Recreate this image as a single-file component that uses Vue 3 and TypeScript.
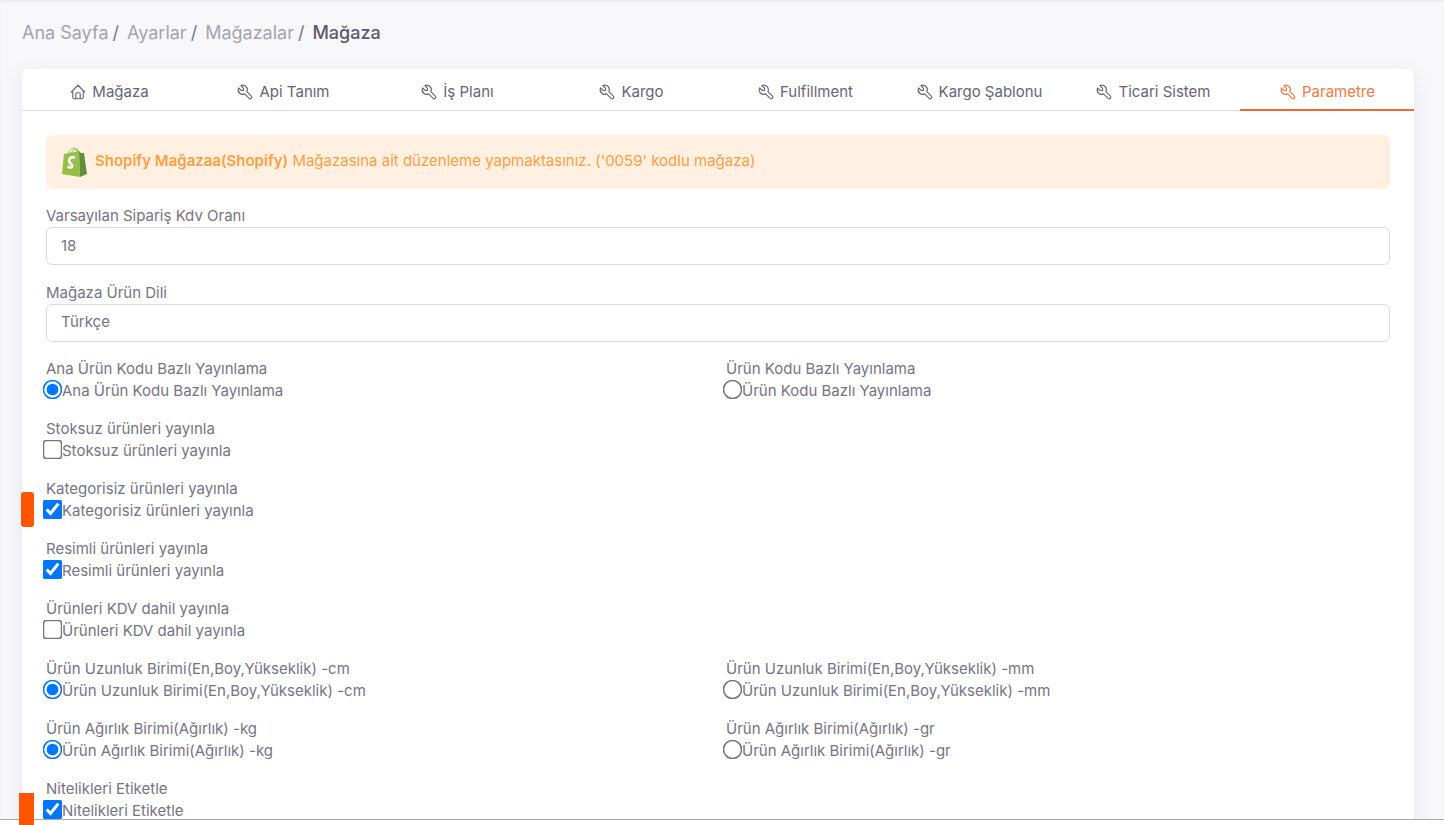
<script setup lang="ts">
import { ref } from 'vue'

interface Option {
  id: string
  label: string
  type: 'radio' | 'checkbox'
  group?: string
  checked: boolean
  flag?: string
}

const crumbs = ['Ana Sayfa', 'Ayarlar', 'Mağazalar']
const tabs = ['Mağaza', 'Api Tanım', 'İş Planı', 'Kargo', 'Fulfillment', 'Kargo Şablonu', 'Ticari Sistem', 'Parametre']
const active = ref('Parametre')
const vat = ref('18')
const language = ref('Türkçe')

const rows: Option[][] = [
  [
    { id: 'pub-main', label: 'Ana Ürün Kodu Bazlı Yayınlama', type: 'radio', group: 'publish', checked: true },
    { id: 'pub-code', label: 'Ürün Kodu Bazlı Yayınlama', type: 'radio', group: 'publish', checked: false },
  ],
  [{ id: 'no-stock', label: 'Stoksuz ürünleri yayınla', type: 'checkbox', checked: false }],
  [{ id: 'no-category', label: 'Kategorisiz ürünleri yayınla', type: 'checkbox', checked: true, flag: 'flag-small' }],
  [{ id: 'with-image', label: 'Resimli ürünleri yayınla', type: 'checkbox', checked: true }],
  [{ id: 'with-vat', label: 'Ürünleri KDV dahil yayınla', type: 'checkbox', checked: false }],
  [
    { id: 'len-cm', label: 'Ürün Uzunluk Birimi(En,Boy,Yükseklik) -cm', type: 'radio', group: 'length', checked: true },
    { id: 'len-mm', label: 'Ürün Uzunluk Birimi(En,Boy,Yükseklik) -mm', type: 'radio', group: 'length', checked: false },
  ],
  [
    { id: 'w-kg', label: 'Ürün Ağırlık Birimi(Ağırlık) -kg', type: 'radio', group: 'weight', checked: true },
    { id: 'w-gr', label: 'Ürün Ağırlık Birimi(Ağırlık) -gr', type: 'radio', group: 'weight', checked: false },
  ],
  [{ id: 'tag-attrs', label: 'Nitelikleri Etiketle', type: 'checkbox', checked: true, flag: 'flag-large' }],
]
</script>

<template>
  <div class="page">
    <nav class="breadcrumb" aria-label="Sayfa yolu">
      <template v-for="c in crumbs" :key="c">
        <a href="#">{{ c }}</a><span class="sep">/</span>
      </template>
      <span class="current">Mağaza</span>
    </nav>

    <main class="card">
      <div class="tabs" role="tablist">
        <button
          v-for="(t, i) in tabs"
          :key="t"
          type="button"
          role="tab"
          class="tab"
          :class="{ active: active === t }"
          :aria-selected="active === t"
          @click="active = t"
        >
          <svg v-if="i === 0" class="icon" viewBox="0 0 24 24" aria-hidden="true">
            <path d="M5 12H3l9-9 9 9h-2M5 12v7a2 2 0 0 0 2 2h10a2 2 0 0 0 2-2v-7M9 21v-6a2 2 0 0 1 2-2h2a2 2 0 0 1 2 2v6" />
          </svg>
          <svg v-else class="icon" viewBox="0 0 24 24" aria-hidden="true">
            <path d="M7 10h3V7L6.500 3.500a6 6 0 0 1 8 8l6 6a2 2 0 0 1-3 3l-6-6a6 6 0 0 1-8-8L7 10" />
          </svg>
          <span>{{ t }}</span>
        </button>
      </div>

      <div class="content">
        <div class="alert" role="alert">
          <svg class="logo" viewBox="0 0 26 30" aria-hidden="true">
            <path d="M7 8C8 3 11 1 13 1s3 2 4 5M10 7c1-3 3-5 5-5s3 2 3 4" fill="none" stroke="#95bf47" stroke-width="1" />
            <path d="M3 7l15-3 1 26L1 27z" fill="#95bf47" />
            <path d="M18 4l2 2 3 0 3 21-7 3z" fill="#5e8e3e" />
            <path d="M14 10.500c-3.500-1-6 .5-6 3.200 0 2.800 3.500 2.800 3.200 5.300-.3 2-2.600 1.800-4.500.4" fill="none" stroke="#fff" stroke-width="2.700" />
          </svg>
          <p><strong>Shopify Mağazaa(Shopify)</strong> Mağazasına ait düzenleme yapmaktasınız. ('0059' kodlu mağaza)</p>
        </div>

        <div class="field">
          <label for="vat">Varsayılan Sipariş Kdv Oranı</label>
          <input id="vat" v-model="vat" type="text" class="control" />
        </div>
        <div class="field">
          <label for="language">Mağaza Ürün Dili</label>
          <select id="language" v-model="language" class="control">
            <option>Türkçe</option>
          </select>
        </div>

        <div v-for="(row, r) in rows" :key="r" class="row">
          <div v-for="o in row" :key="o.id" class="option">
            <span v-if="o.flag" class="flag" :class="o.flag"></span>
            <span class="title">{{ o.label }}</span>
            <label class="choice">
              <input :id="o.id" :type="o.type" :name="o.group ?? o.id" :checked="o.checked" />
              <span>{{ o.label }}</span>
            </label>
          </div>
        </div>
      </div>
    </main>
    <div class="bottom-line"></div>
  </div>
</template>

<style>
html {
  background: #f8f7fa;
}
body {
  margin: 0;
  overflow: hidden;
}
</style>

<style scoped>
.page {
  box-sizing: border-box;
  height: 100vh;
  overflow: hidden;
  padding: 20px 30px 0 22px;
  background: #f8f7fa;
  box-shadow: inset 0 2px 2px #ececef;
  color: #777384;
  font: 15px/22px Inter, "Liberation Sans", sans-serif;
}
.breadcrumb {
  display: flex;
  margin-bottom: 23px;
  font-size: 18px;
  line-height: 26px;
}
.breadcrumb a {
  color: #a5a3ae;
  text-decoration: none;
}
.sep {
  margin: 0 8px 0 4px;
}
.current {
  color: #5d596c;
  font-weight: 500;
}
.card {
  border-radius: 6px;
  background: #fff;
  box-shadow: 0 4px 18px rgba(75, 70, 92, 0.1);
}
.tabs {
  display: grid;
  grid-template-columns: repeat(8, 1fr);
  box-shadow: inset 0 -1px #dbdade;
}
.tab {
  display: flex;
  align-items: center;
  justify-content: center;
  gap: 5px;
  height: 42px;
  padding: 6px 0 0;
  border: 0;
  border-bottom: 2px solid transparent;
  background: none;
  color: #686477;
  font: inherit;
  white-space: nowrap;
}
.tab.active {
  border-color: #ea6a35;
  color: #f07a45;
}
.icon {
  width: 18px;
  height: 18px;
  fill: none;
  stroke: currentColor;
  stroke-width: 1.5;
  stroke-linecap: round;
  stroke-linejoin: round;
}
.content {
  padding: 24px;
}
.alert {
  display: flex;
  align-items: center;
  gap: 8px;
  box-sizing: border-box;
  height: 54px;
  margin-bottom: 15px;
  padding: 0 15px;
  border-radius: 6px;
  background: #fff0e1;
  color: #ff9f43;
}
.alert p {
  margin: 0;
  padding-bottom: 2px;
}
.alert strong {
  font-weight: 600;
}
.logo {
  width: 26px;
  height: 30px;
}
.field {
  margin-bottom: 16px;
}
.field label {
  display: block;
  line-height: 23px;
}
.control {
  display: block;
  box-sizing: border-box;
  width: 100%;
  height: 38px;
  padding: 0 14px 2px;
  border: 1px solid #dbdade;
  border-radius: 6px;
  appearance: none;
  background: #fff;
  color: inherit;
  font: inherit;
}
.row {
  display: grid;
  grid-template-columns: 1fr 1fr;
  gap: 16px;
  margin-bottom: 16px;
}
.option {
  position: relative;
}
.title {
  display: block;
}
.choice {
  display: flex;
}
.choice input {
  width: 13px;
  height: 13px;
  margin: 3px 3px 0 0;
  transform: scale(1.5);
}
.flag {
  position: absolute;
  background: #ff5500;
}
.flag-small {
  top: 14px;
  left: -25px;
  width: 13px;
  height: 35px;
  border-radius: 3px;
}
.flag-large {
  z-index: 1;
  top: 15px;
  left: -27px;
  width: 15px;
  height: 35px;
}
.bottom-line {
  position: fixed;
  right: 0;
  bottom: 0;
  left: 0;
  height: 5px;
  border-top: 1px solid #aaaaaa;
  background: #fff;
}
</style>
